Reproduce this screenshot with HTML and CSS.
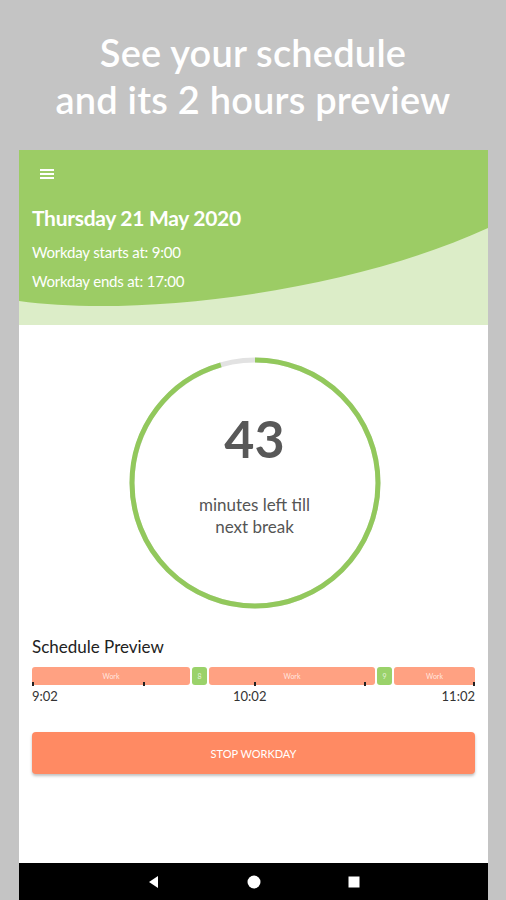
FILE: index.html
```html
<!DOCTYPE html>
<html>
<head>
<meta charset="utf-8">
<link rel="stylesheet" href="styles.css">
</head>
<body>
<div class="promo">
  <h1 class="promo-title">See your schedule<br>and its 2 hours preview</h1>
</div>
<div class="screen">
  <header class="app-header">
    <svg class="header-wave" viewBox="0 0 469 175" preserveAspectRatio="none" width="469" height="175">
      <path d="M0 151 C 120 168, 330 142, 469 78 L469 175 L0 175 Z" fill="#dcedc8"/>
    </svg>
    <div class="header-content">
      <div class="menu-icon"><span></span><span></span><span></span></div>
      <div class="date">Thursday 21 May 2020</div>
      <div class="hours">Workday starts at: 9:00</div>
      <div class="hours">Workday ends at: 17:00</div>
    </div>
  </header>
  <main class="content">
    <div class="timer">
      <svg class="ring" width="256" height="256" viewBox="0 0 256 256">
        <circle cx="128" cy="128" r="123" fill="none" stroke="#e2e2e2" stroke-width="5"/>
        <circle cx="128" cy="128" r="123" fill="none" stroke="#92c85c" stroke-width="5" stroke-dasharray="738 800" transform="rotate(-90 128 128)"/>
      </svg>
      <div class="timer-text">
        <div class="timer-num">43</div>
        <div class="timer-label">minutes left till<br>next break</div>
      </div>
    </div>
    <section class="preview">
      <h2 class="preview-title">Schedule Preview</h2>
      <div class="bar">
        <div class="seg work" style="width:158px">Work</div>
        <div class="seg brk" style="width:15px">8</div>
        <div class="seg work" style="width:166px">Work</div>
        <div class="seg brk" style="width:15px">9</div>
        <div class="seg work" style="flex:1">Work</div>
        <span class="tick" style="left:0px"></span>
        <span class="tick" style="left:111px"></span>
        <span class="tick" style="left:222px"></span>
        <span class="tick" style="left:332px"></span>
        <span class="tick" style="left:441px"></span>
      </div>
      <div class="times"><span>9:02</span><span>10:02</span><span>11:02</span></div>
    </section>
    <button class="stop-btn">STOP WORKDAY</button>
  </main>
  <nav class="navbar">
    <svg width="14" height="14" viewBox="0 0 14 14"><path d="M11 1 L11 13 L2 7 Z" fill="#fff"/></svg>
    <svg width="14" height="14" viewBox="0 0 14 14"><circle cx="7" cy="7" r="6.5" fill="#fff"/></svg>
    <svg width="14" height="14" viewBox="0 0 14 14"><rect x="1.5" y="1.5" width="11" height="11" fill="#fff"/></svg>
  </nav>
</div>
</body>
</html>
```
FILE: styles.css
```css
* { box-sizing: border-box; }
html, body { margin: 0; padding: 0; }
body {
  width: 506px;
  height: 900px;
  overflow: hidden;
  background: #c4c4c4;
  font-family: Lato, "Open Sans", sans-serif;
}
.promo {
  height: 150px;
  padding-top: 29px;
}
.promo-title {
  margin: 0;
  text-align: center;
  color: #fff;
  font-size: 38px;
  font-weight: 600;
  line-height: 47px;
  letter-spacing: 0.2px;
}
.screen {
  margin: 0 18px 0 19px;
  width: 469px;
  height: 750px;
  background: #fff;
  display: flex;
  flex-direction: column;
}
.app-header {
  height: 175px;
  background: #9ccc65;
  display: grid;
  color: #fff;
}
.header-wave, .header-content { grid-area: 1 / 1; }
.header-content {
  padding: 19px 13px 0 13px;
}
.menu-icon {
  width: 14px;
  margin-left: 8px;
  display: flex;
  flex-direction: column;
  gap: 2px;
}
.menu-icon span {
  display: block;
  height: 2px;
  background: #fff;
}
.date {
  margin-top: 26px;
  font-size: 21px;
  font-weight: 700;
  line-height: 26px;
  letter-spacing: -0.3px;
}
.hours {
  margin-top: 10px;
  font-size: 15px;
  line-height: 22px;
  letter-spacing: -0.2px;
}
.hours + .hours { margin-top: 7px; }
.content {
  flex: 1;
  display: flex;
  flex-direction: column;
  padding: 0 13px;
}
.timer {
  display: grid;
  justify-items: center;
  align-items: center;
  margin-top: 30px;
  margin-left: 2px;
}
.ring, .timer-text { grid-area: 1 / 1; }
.timer-text {
  text-align: center;
  color: #555;
  margin-top: -20px;
}
.timer-num {
  font-size: 52px;
  font-weight: 700;
  line-height: 60px;
  color: #585858;
}
.timer-label {
  margin-top: 26px;
  font-size: 17px;
  line-height: 22px;
  color: #555;
}
.preview { margin-top: 25px; }
.preview-title {
  margin: 0;
  font-size: 17px;
  font-weight: 400;
  color: #222;
  line-height: 22px;
}
.bar {
  position: relative;
  margin-top: 9px;
  display: flex;
  gap: 2px;
  height: 18px;
}
.seg {
  border-radius: 3px;
  color: rgba(255,255,255,0.75);
  font-size: 7px;
  line-height: 18px;
  text-align: center;
}
.work { background: #ffa182; }
.brk { background: #9ad26a; }
.tick {
  position: absolute;
  bottom: -1px;
  width: 2px;
  height: 4px;
  background: #222;
}
.times {
  display: flex;
  justify-content: space-between;
  font-size: 13px;
  color: #333;
  line-height: 18px;
  margin-top: 2px;
}
.stop-btn {
  margin-top: 27px;
  height: 42px;
  border: none;
  border-radius: 4px;
  background: #ff8a63;
  color: #fff;
  font-family: Lato, sans-serif;
  font-size: 11px;
  box-shadow: 0 2px 3px rgba(0,0,0,0.25);
}
.navbar {
  height: 37px;
  background: #000;
  display: flex;
  justify-content: center;
  align-items: center;
  gap: 86px;
  margin-top: auto;
}
```
